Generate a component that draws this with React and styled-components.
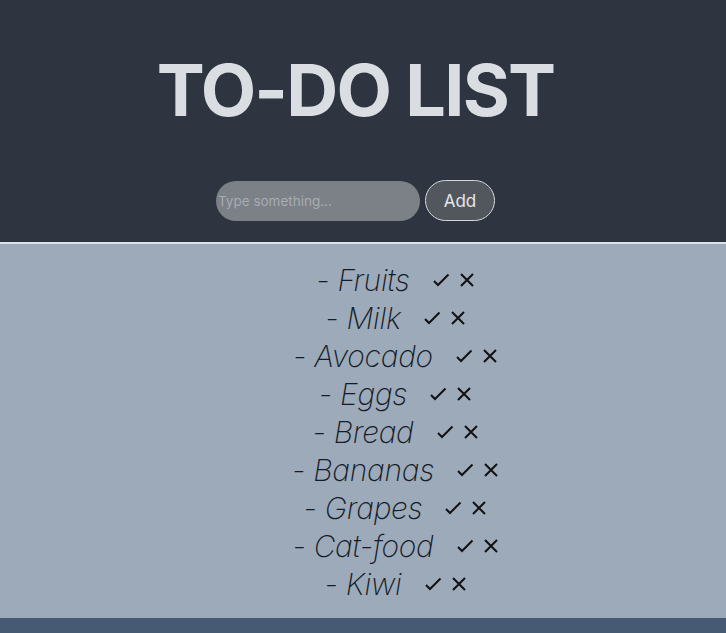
import React, { useState } from "react";
import styled, { createGlobalStyle } from "styled-components";

const Global = createGlobalStyle`
  html, body { margin: 0; padding: 0; }
  body {
    background: #475a73;
    font-family: Inter, "Noto Sans", sans-serif;
    min-height: 100vh;
  }
  * { box-sizing: border-box; }
`;

const Header = styled.header`
  background: #2e3440;
  height: 244px;
  display: flex;
  flex-direction: column;
  align-items: center;
  padding: 50px 15px 0 0;
  border-bottom: 2px solid #dde2e7;
`;

const Title = styled.h1`
  margin: 0;
  font-size: 72px;
  line-height: 80px;
  font-weight: 700;
  color: #dadee3;
  letter-spacing: -0.025em;
`;

const Form = styled.form`
  display: flex;
  align-items: center;
  gap: 5px;
  margin-top: 50px;
`;

const Input = styled.input`
  width: 204px;
  height: 40px;
  border: none;
  border-radius: 9999px;
  background: #7c8087;
  color: #e5e7eb;
  font-family: Inter, sans-serif;
  font-size: 13.5px;
  padding: 0 2px;
  outline: none;
  &::placeholder { color: #a9acb1; }
`;

const AddButton = styled.button`
  width: 70px;
  height: 41px;
  border-radius: 9999px;
  border: 1px solid #d4d8dc;
  background: #52565d;
  color: #e5e7eb;
  font-family: Inter, sans-serif;
  font-size: 17px;
  cursor: pointer;
`;

const List = styled.ul`
  list-style: none;
  margin: 0;
  padding: 17px 0 15px;
  background: #9daab9;
  display: flex;
  flex-direction: column;
`;

const Item = styled.li`
  display: grid;
  grid-template-columns: 1fr auto 1fr;
  align-items: center;
  height: 38px;
`;

const Label = styled.span`
  grid-column: 2;
  font-size: 30px;
  font-style: italic;
  font-weight: 200;
  color: #141c2b;
  letter-spacing: -0.3px;
`;

const Actions = styled.div`
  grid-column: 3;
  display: flex;
  align-items: center;
  gap: 6px;
  padding-left: 21px;
`;

const IconButton = styled.button`
  background: none;
  border: none;
  padding: 0;
  width: 20px;
  height: 20px;
  display: flex;
  align-items: center;
  justify-content: center;
  cursor: pointer;
`;

const Check = () => (
  <svg width="18" height="14" viewBox="0 0 18 14">
    <path d="M2 8 L6 12 L16.5 1.5" fill="none" stroke="#111" strokeWidth="2" />
  </svg>
);

const Cross = () => (
  <svg width="16" height="16" viewBox="0 0 16 16">
    <path d="M2 2 L14 14 M14 2 L2 14" fill="none" stroke="#111" strokeWidth="2" />
  </svg>
);

const items = ["Fruits", "Milk", "Avocado", "Eggs", "Bread", "Bananas", "Grapes", "Cat-food", "Kiwi"];

export default function App() {
  const [text, setText] = useState("");
  return (
    <>
      <Global />
      <Header>
        <Title>TO-DO LIST</Title>
        <Form onSubmit={(e) => e.preventDefault()}>
          <Input
            placeholder="Type something..."
            value={text}
            onChange={(e) => setText(e.target.value)}
          />
          <AddButton type="submit">Add</AddButton>
        </Form>
      </Header>
      <List>
        {items.map((it) => (
          <Item key={it}>
            <Label>- {it}</Label>
            <Actions>
              <IconButton aria-label="done"><Check /></IconButton>
              <IconButton aria-label="remove"><Cross /></IconButton>
            </Actions>
          </Item>
        ))}
      </List>
    </>
  );
}
